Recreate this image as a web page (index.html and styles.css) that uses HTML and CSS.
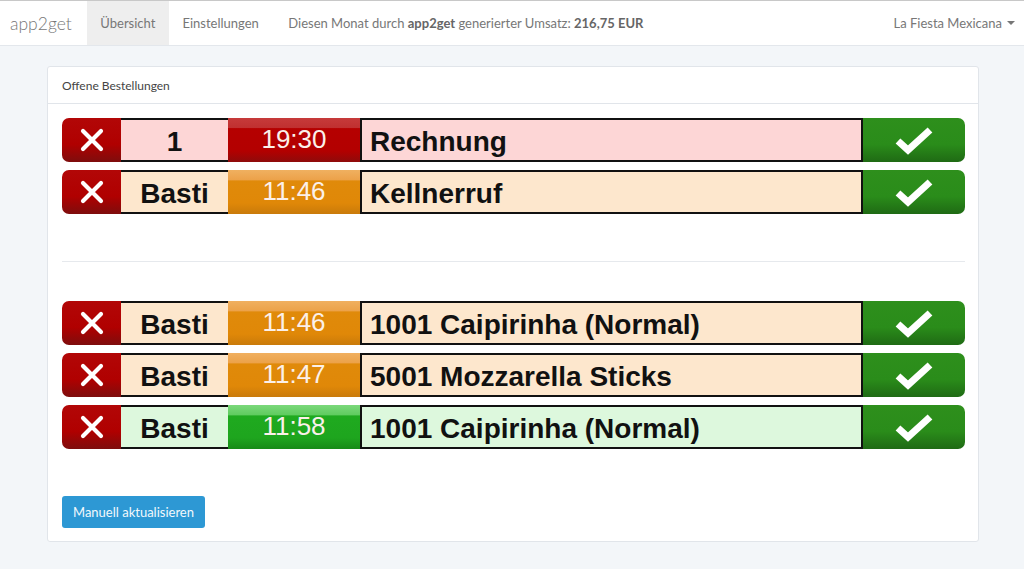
FILE: index.html
```html
<!DOCTYPE html>
<html lang="de">
<head>
<meta charset="utf-8">
<title>app2get</title>
<link rel="stylesheet" href="styles.css">
</head>
<body>
<nav class="navbar">
  <a class="brand">app2get</a>
  <ul class="nav">
    <li class="active"><a>Übersicht</a></li>
    <li><a>Einstellungen</a></li>
  </ul>
  <p class="navtext">Diesen Monat durch <b>app2get</b> generierter Umsatz: <b>216,75 EUR</b></p>
  <div class="user">La Fiesta Mexicana <span class="caret"></span></div>
</nav>

<main class="container">
  <section class="panel">
    <header class="panel-head">Offene Bestellungen</header>
    <div class="panel-body">
      <div class="group">
        <div class="order red">
          <div class="btn-x"><svg viewBox="0 0 30 30" width="30" height="30"><path d="M6 6 L24 24 M24 6 L6 24" stroke="#fff" stroke-width="4.2" stroke-linecap="round"/></svg></div>
          <div class="name">1</div>
          <div class="time">19:30</div>
          <div class="item">Rechnung</div>
          <div class="btn-ok"><svg viewBox="0 0 42 32" width="42" height="32"><path d="M5 17 L15 26 L37 6" stroke="#fff" stroke-width="7" fill="none"/></svg></div>
        </div>
        <div class="order orange">
          <div class="btn-x"><svg viewBox="0 0 30 30" width="30" height="30"><path d="M6 6 L24 24 M24 6 L6 24" stroke="#fff" stroke-width="4.2" stroke-linecap="round"/></svg></div>
          <div class="name">Basti</div>
          <div class="time">11:46</div>
          <div class="item">Kellnerruf</div>
          <div class="btn-ok"><svg viewBox="0 0 42 32" width="42" height="32"><path d="M5 17 L15 26 L37 6" stroke="#fff" stroke-width="7" fill="none"/></svg></div>
        </div>
      </div>
      <hr class="sep">
      <div class="group">
        <div class="order orange">
          <div class="btn-x"><svg viewBox="0 0 30 30" width="30" height="30"><path d="M6 6 L24 24 M24 6 L6 24" stroke="#fff" stroke-width="4.2" stroke-linecap="round"/></svg></div>
          <div class="name">Basti</div>
          <div class="time">11:46</div>
          <div class="item">1001 Caipirinha (Normal)</div>
          <div class="btn-ok"><svg viewBox="0 0 42 32" width="42" height="32"><path d="M5 17 L15 26 L37 6" stroke="#fff" stroke-width="7" fill="none"/></svg></div>
        </div>
        <div class="order orange">
          <div class="btn-x"><svg viewBox="0 0 30 30" width="30" height="30"><path d="M6 6 L24 24 M24 6 L6 24" stroke="#fff" stroke-width="4.2" stroke-linecap="round"/></svg></div>
          <div class="name">Basti</div>
          <div class="time">11:47</div>
          <div class="item">5001 Mozzarella Sticks</div>
          <div class="btn-ok"><svg viewBox="0 0 42 32" width="42" height="32"><path d="M5 17 L15 26 L37 6" stroke="#fff" stroke-width="7" fill="none"/></svg></div>
        </div>
        <div class="order green">
          <div class="btn-x"><svg viewBox="0 0 30 30" width="30" height="30"><path d="M6 6 L24 24 M24 6 L6 24" stroke="#fff" stroke-width="4.2" stroke-linecap="round"/></svg></div>
          <div class="name">Basti</div>
          <div class="time">11:58</div>
          <div class="item">1001 Caipirinha (Normal)</div>
          <div class="btn-ok"><svg viewBox="0 0 42 32" width="42" height="32"><path d="M5 17 L15 26 L37 6" stroke="#fff" stroke-width="7" fill="none"/></svg></div>
        </div>
      </div>
      <button class="btn-refresh">Manuell aktualisieren</button>
    </div>
  </section>
</main>
</body>
</html>
```

FILE: styles.css
```css
* { box-sizing: border-box; }
html, body { margin: 0; padding: 0; }
body {
  background: #f3f6f9;
  font-family: Lato, "Open Sans", "Liberation Sans", sans-serif;
  font-size: 13px;
  color: #555;
}
.navbar {
  display: flex;
  align-items: stretch;
  height: 46px;
  background: #fff;
  border-top: 1px solid #c8c8c8;
  border-bottom: 1px solid #e3e7ec;
}
.brand {
  display: flex;
  align-items: center;
  padding: 0 15px 0 10px;
  font-size: 17.5px;
  font-weight: 300;
  color: #777;
}
.nav {
  display: flex;
  list-style: none;
  margin: 0;
  padding: 0;
}
.nav li a {
  display: flex;
  align-items: center;
  height: 100%;
  padding: 0 13.5px;
  color: #777;
}
.nav li.active a { background: #eeeeee; }
.navtext {
  margin: 0 0 0 16px;
  display: flex;
  align-items: center;
  color: #777;
  white-space: pre;
}
.navtext b { font-weight: 700; color: #666; }
.user {
  margin-left: auto;
  display: flex;
  align-items: center;
  padding-right: 9px;
  color: #777;
}
.caret {
  display: inline-block;
  margin-left: 5px;
  border-top: 4px solid #777;
  border-left: 4px solid transparent;
  border-right: 4px solid transparent;
}
.container {
  margin: 20px 45px 0 47px;
}
.panel {
  background: #fff;
  border: 1px solid #e1e5ea;
  border-radius: 3px;
}
.panel-head {
  height: 37px;
  padding: 0 14px;
  display: flex;
  align-items: center;
  font-size: 12px;
  color: #444;
  border-bottom: 1px solid #e1e5ea;
}
.panel-body {
  padding: 14px 13px 13px 14px;
}
.group {
  display: flex;
  flex-direction: column;
  gap: 8px;
}
.sep {
  border: 0;
  border-top: 1px solid #e6e9ed;
  margin: 47px 0 39px;
}
.order {
  display: flex;
  height: 44px;
  font-family: "Liberation Sans", Arial, sans-serif;
}
.btn-x {
  width: 59px;
  border-radius: 7px 0 0 7px;
  background: linear-gradient(#b20707 0%, #b00000 60%, #7e0d0d 100%);
  display: flex;
  align-items: center;
  justify-content: center;
}
.btn-ok {
  width: 102px;
  border-radius: 0 7px 7px 0;
  background: linear-gradient(#2e8f1c 0%, #2a8c1a 60%, #1f6a14 100%);
  display: flex;
  align-items: center;
  justify-content: center;
}
.name, .item {
  border-top: 2px solid #111;
  border-bottom: 2px solid #111;
  display: flex;
  align-items: center;
  padding-top: 3px;
  font-weight: 700;
  font-size: 28px;
  color: #111;
}
.name {
  width: 107px;
  justify-content: center;
}
.item {
  flex: 1;
  padding-left: 8px;
  border-left: 2px solid #111;
  border-right: 2px solid #111;
}
.time {
  width: 132px;
  display: flex;
  align-items: center;
  justify-content: center;
  font-size: 26px;
  color: #fbf0ea;
  padding-bottom: 2px;
}
.red .name, .red .item { background: #fdd6d6; }
.orange .name, .orange .item { background: #fde7cd; }
.green .name, .green .item { background: #ddf8dd; }
.red .time {
  background: linear-gradient(#c63a3a 0%, #c03030 22%, #b50000 24%, #b30000 75%, #8e0b0b 100%);
}
.orange .time {
  background: linear-gradient(#f0b060 0%, #eca24a 22%, #e08a0a 25%, #e08808 75%, #c97a0a 100%);
}
.green .time {
  background: linear-gradient(#7bd87b 0%, #60cc60 22%, #1faa1f 25%, #1ea51e 75%, #168a16 100%);
}
.btn-refresh {
  margin-top: 47px;
  display: block;
  height: 32px;
  padding: 0 11px;
  background: #2d98d4;
  border: 0;
  border-radius: 3px;
  color: #f2f8fc;
  font-family: Lato, "Open Sans", "Liberation Sans", sans-serif;
  font-size: 13px;
}
```
